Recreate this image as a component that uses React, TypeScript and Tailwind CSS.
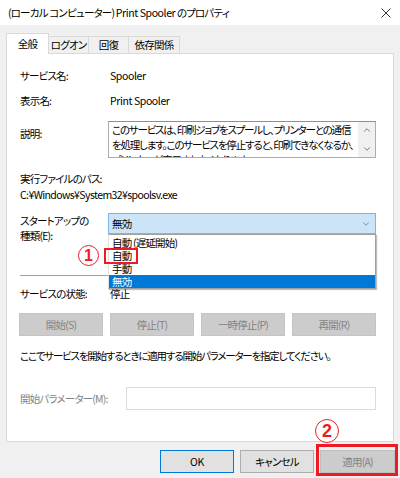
import { ChevronDown, ChevronUp } from "lucide-react";

const tabs = [
  { label: "全般", w: "w-[43px]", active: true },
  { label: "ログオン", w: "w-[41px]", active: false },
  { label: "回復", w: "w-[41px]", active: false },
  { label: "依存関係", w: "w-[52px]", active: false },
];

const startupOptions = ["自動 (遅延開始)", "自動", "手動", "無効"];

const serviceButtons = ["開始(S)", "停止(T)", "一時停止(P)", "再開(R)"];

function CircledNumber({ n, className }: { n: string; className: string }) {
  return (
    <div
      className={`absolute flex items-center justify-center rounded-full border-[1.5px] border-[#ed1c24] bg-white text-[#ed1c24] font-['Liberation_Sans',sans-serif] font-bold leading-none tracking-normal ${className}`}
    >
      {n}
    </div>
  );
}

export default function App() {
  return (
    <div className="relative h-[478px] w-[400px] overflow-hidden bg-[#f0f0f0] text-[10.5px] tracking-[-0.8px] text-black font-['Noto_Sans_CJK_JP',sans-serif] [font-feature-settings:'palt']">
      {/* Title bar */}
      <div className="flex h-[25px] items-center justify-between bg-white pl-[8px] pr-[9px]">
        <span className="whitespace-pre">
          (ローカル コンピューター) <span className="tracking-[-0.4px]">Print Spooler</span> のプロパティ
        </span>
        <svg width="10" height="10" viewBox="0 0 10 10" className="text-[#333]">
          <path d="M0.5 0.5 9.5 9.5 M9.5 0.5 0.5 9.5" stroke="currentColor" strokeWidth="1" />
        </svg>
      </div>

      {/* Tabs */}
      <div className="mt-[8px] flex items-end pl-[6px]">
        {tabs.map((tab) =>
          tab.active ? (
            <div
              key={tab.label}
              className={`relative z-10 -mb-px flex h-[21px] items-center justify-center whitespace-nowrap border border-b-0 border-[#d9d9d9] bg-white ${tab.w}`}
            >
              {tab.label}
            </div>
          ) : (
            <div
              key={tab.label}
              className={`-ml-px flex h-[17px] items-center justify-center whitespace-nowrap border border-b-0 border-[#d9d9d9] bg-[#f0f0f0] ${tab.w}`}
            >
              {tab.label}
            </div>
          )
        )}
      </div>

      {/* Panel */}
      <div className="mx-[6px] flex h-[389px] flex-col border border-[#d9d9d9] bg-white pl-[13px] pr-[17px]">
        <div className="mt-[14px] grid h-[16px] grid-cols-[88px_1fr] items-center">
          <span>サービス名:</span>
          <span className="pl-[2px] tracking-[-0.4px]">Spooler</span>
        </div>
        <div className="mt-[9px] grid h-[16px] grid-cols-[88px_1fr] items-center">
          <span>表示名:</span>
          <span className="pl-[2px] tracking-[-0.4px]">Print Spooler</span>
        </div>

        <div className="mt-[12px] grid grid-cols-[88px_1fr]">
          <span className="mt-[5px] leading-[16px]">説明:</span>
          <div className="flex h-[37px] min-w-0 border border-[#abadb3] border-t-[#8e8f8f]">
            <div className="min-w-0 flex-1 overflow-hidden pl-[3px] pr-[2px] leading-[15px] tracking-[-1.2px]">
              このサービスは、印刷ジョブをスプールし、プリンターとの通信を処理します。このサービスを停止すると、印刷できなくなるか、プリンターが表示されなくなります。
            </div>
            <div className="flex w-[17px] shrink-0 flex-col items-center justify-between bg-[#f0f0f0] py-[3px] text-[#606060]">
              <ChevronUp size={10} strokeWidth={2} />
              <ChevronDown size={10} strokeWidth={2} />
            </div>
          </div>
        </div>

        <div className="mt-[13px] h-[16px] leading-[16px]">実行ファイルのパス:</div>
        <div className="h-[16px] leading-[16px] tracking-[-0.6px]">C:¥Windows¥System32¥spoolsv.exe</div>

        <div className="mt-[10px] grid grid-cols-[88px_1fr]">
          <div className="leading-[15px]">
            <div>スタートアップの</div>
            <div>種類(E):</div>
          </div>
          <div className="relative h-[21px]">
            <div className="flex h-full items-center justify-between border border-[#7eb4ea] bg-[#cce4f7] pl-[3px] pr-[4px]">
              <span>無効</span>
              <ChevronDown size={10} strokeWidth={1.5} className="text-[#555]" />
            </div>
            {/* Open list */}
            <div className="absolute left-0 right-0 top-[21px] z-20 border border-[#a0a0a0] border-l-[#e0e0e0] bg-white pt-px shadow-[1px_1px_1px_rgba(0,0,0,0.25)]">
              {startupOptions.map((opt, i) => (
                <div
                  key={opt}
                  className={
                    i === startupOptions.length - 1
                      ? "flex h-[13px] items-center bg-[#0078d7] pl-[3px] text-white"
                      : "flex h-[13px] items-center pl-[3px]"
                  }
                >
                  {opt}
                </div>
              ))}
              <div className="absolute left-[-5px] top-[13px] h-[16px] w-[34px] border-[2px] border-[#ed1c24]" />
              <CircledNumber n="1" className="left-[-31px] top-[10px] h-[21px] w-[21px] text-[16px]" />
            </div>
          </div>
        </div>

        <div className="mt-[32px] h-px bg-[#a0a0a0]" />

        <div className="mt-[10px] grid h-[16px] grid-cols-[88px_1fr] items-center">
          <span>サービスの状態:</span>
          <span className="pl-[2px]">停止</span>
        </div>

        <div className="-ml-px mt-[11px] grid grid-cols-4 gap-[7px]">
          {serviceButtons.map((b) => (
            <div
              key={b}
              className="flex h-[23px] items-center justify-center border border-[#c4c4c4] bg-[#cccccc] text-[#838383]"
            >
              {b}
            </div>
          ))}
        </div>

        <div className="mt-[12px] h-[16px] whitespace-nowrap leading-[16px] tracking-[-1.2px]">
          ここでサービスを開始するときに適用する開始パラメーターを指定してください。
        </div>

        <div className="mt-[23px] grid grid-cols-[106px_1fr] items-center">
          <span className="text-[#838383]">開始パラメーター(M):</span>
          <div className="h-[23px] border border-[#dadada] bg-white" />
        </div>
      </div>

      {/* Dialog buttons */}
      <div className="mt-[8px] flex justify-end gap-[6px] pr-[5px]">
        <div className="flex h-[23px] w-[74px] items-center justify-center border border-[#0078d7] bg-[#e1e1e1] tracking-[-0.4px]">
          OK
        </div>
        <div className="flex h-[23px] w-[74px] items-center justify-center border border-[#adadad] bg-[#e1e1e1]">
          キャンセル
        </div>
        <div className="flex h-[23px] w-[75px] items-center justify-center border border-[#bfbfbf] bg-[#cccccc] text-[#838383]">
          適用(A)
        </div>
      </div>

      {/* Annotations */}
      <div className="absolute left-[316px] top-[444px] h-[32px] w-[82px] border-[3px] border-[#ed1c24]" />
      <CircledNumber n="2" className="left-[315px] top-[419px] h-[24px] w-[24px] text-[18px]" />
    </div>
  );
}
